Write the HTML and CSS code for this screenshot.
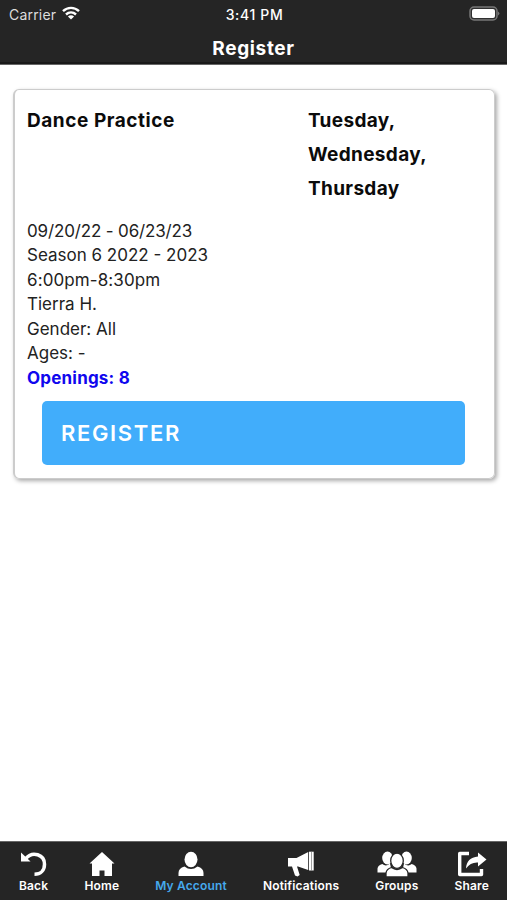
FILE: index.html
```html
<!DOCTYPE html>
<html lang="en">
<head>
<meta charset="utf-8">
<title>Register</title>
<link rel="stylesheet" href="styles.css">
</head>
<body>
<div class="screen">
  <header class="header">
    <div class="status">
      <div class="carrier"><span>Carrier</span>
        <svg class="wifi" viewBox="0 0 18 14"><g fill="none" stroke="#fff" stroke-width="2.4"><path d="M1 5.2C5.6.7 12.4.7 17 5.2"/><path d="M4 8.5C6.9 5.8 11.1 5.8 14 8.5"/></g><path d="M9 13.6 5.9 10.5Q9 7.9 12.1 10.5Z" fill="#fff"/></svg>
      </div>
      <time class="clock">3:41 PM</time>
      <svg class="battery" viewBox="0 0 31 16"><rect x="1" y="1" width="27" height="13" rx="4" fill="#303030" stroke="#777" stroke-width="1.5"/><rect x="3" y="3" width="23" height="9" rx="2" fill="#fff"/><path d="M29.2 5.5Q31.5 7.5 29.2 9.5Z" fill="#888"/></svg>
    </div>
    <h1 class="title">Register</h1>
  </header>
  <main class="content">
    <section class="card">
      <div class="card-head">
        <h2 class="name">Dance Practice</h2>
        <p class="days">Tuesday, Wednesday, Thursday</p>
      </div>
      <ul class="details">
        <li class="dates">09/20/22 - 06/23/23</li>
        <li>Season 6 2022 - 2023</li>
        <li class="hours">6:00pm-8:30pm</li>
        <li>Tierra H.</li>
        <li>Gender: All</li>
        <li>Ages: -</li>
        <li class="openings">Openings: 8</li>
      </ul>
      <button class="register">REGISTER</button>
    </section>
  </main>
  <nav class="tabs">
    <a class="tab back"><svg width="26" height="26" viewBox="0 0 26 26"><path d="M5 7.300C11.500-.3 23.500 3.500 23.500 13.200 23.500 19.500 19.500 23.300 13.500 23.300" fill="none" stroke="#fff" stroke-width="3.500"/><path d="M0 1.500V10.500H9.500Z" fill="#fff"/></svg><span>Back</span></a>
    <a class="tab home"><svg width="26" height="26" viewBox="0 0 26 26"><path d="M13 1 25.500 12.500H23V25H15.500V19.500H10.500V25H3V12.500H.5Z" fill="#fff"/></svg><span>Home</span></a>
    <a class="tab account"><svg width="26" height="26" viewBox="0 0 26 26"><ellipse cx="13" cy="8.500" rx="6.500" ry="7.700" fill="#fff"/><path d="M.5 25V22Q.5 17 6.500 15.500 13 20.500 19.500 15.500 25.500 17 25.500 22V25Z" fill="#fff"/></svg><span>My Account</span></a>
    <a class="tab notifications"><svg width="28" height="26" viewBox="0 0 28 26"><path d="M1 7H9.500L21.200 1V19L11 15.500H10L12.700 24 10.500 25.500 8 24.500 5 15.500H1Z" fill="#fff"/><path d="M22 .7H26.700V19.500H22Z" fill="#fff"/><path d="M24.500 1V19.500" stroke="#777" stroke-width=".7"/></svg><span>Notifications</span></a>
    <a class="tab groups"><svg width="40" height="26" viewBox="0 0 40 26"><g fill="#fff"><ellipse cx="10.500" cy="7" rx="5.300" ry="6.500"/><ellipse cx="29.500" cy="7" rx="5.300" ry="6.500"/><path d="M.5 21.500V17.500Q1 14 5.300 13 9 16 13 12.500L15 21.500ZM39.500 21.500V17.500Q39 14 34.700 13 31 16 27 12.500L25 21.500Z"/></g><g fill="#fff" stroke="#252525" stroke-width="1.300"><path d="M9 26V22Q9.500 18 14.500 16.500 20 20.500 25.500 16.500 30.500 18 31 22V26Z"/><ellipse cx="20" cy="9.800" rx="6.300" ry="7.600"/></g></svg><span>Groups</span></a>
    <a class="tab share"><svg width="30" height="26" viewBox="0 0 30 26"><path d="M12 2.500H2.700V23.500H24.500V18" fill="none" stroke="#fff" stroke-width="3.400" stroke-linejoin="round"/><path d="M21 1.500 29.500 8.500 21 15.500V11.500Q13.500 11 9 17.500 9.500 6.500 21 5.500Z" fill="#fff"/></svg><span>Share</span></a>
  </nav>
</div>
</body>
</html>
```
FILE: styles.css
```css
* { box-sizing: border-box; }
body, h1, h2, p, ul { margin: 0; padding: 0; }
body { font-family: Inter, "Liberation Sans", sans-serif; background: #fff; }
.screen { height: 900px; display: flex; flex-direction: column; }
.header { height: 65px; background: #252525; color: #fff; border-bottom: 1px solid #666; box-shadow: inset 0 -2px #191919; }
.status { height: 28px; padding: 0 7px 0 9px; display: grid; grid-template-columns: 1fr auto 1fr; align-items: center; }
.carrier { display: flex; align-items: center; gap: 6px; font-size: 14px; color: #ddd; letter-spacing: .2px; }
.wifi { width: 18px; height: 14px; margin-top: -2px; }
.clock { font-size: 14px; font-weight: 500; letter-spacing: .65px; }
.battery { width: 31px; height: 16px; justify-self: end; margin-top: -1px; }
.title { font-size: 19px; line-height: 42px; font-weight: 700; letter-spacing: .65px; text-align: center; }
.content { flex: 1; padding: 24px 12px 0 13px; }
.card { height: 390px; border: 2px solid #ccc; border-width: 1px 1px 1px 2px; border-radius: 6px; box-shadow: 2px 2px 4px #aaa; padding: 14px 29px 0 12px; }
.card-head { height: 115px; display: grid; grid-template-columns: 281px 1fr; color: #0b0b0b; }
.name, .days { font-size: 19px; line-height: 34.200px; font-weight: 700; }
.name { letter-spacing: .55px; }
.days { letter-spacing: .33px; }
.details { list-style: none; font-size: 17px; line-height: 24.450px; color: #222; }
.dates { letter-spacing: -.15px; }
.hours { letter-spacing: .1px; }
.openings { color: #1007ee; font-weight: 700; letter-spacing: .2px; }
.register { display: block; width: calc(100% - 15px); height: 64px; margin: 11px 0 0 15px; padding: 0 19px; border: 0; border-radius: 5px; background: #41adfb; color: #fff; font: 600 22px/64px Inter, sans-serif; letter-spacing: 1.650px; text-align: left; }
.tabs { height: 59px; padding: 9px 18px 0 19px; display: flex; justify-content: space-between; background: #252525; border-top: 1px solid #666; color: #fff; }
.tab { display: flex; flex-direction: column; align-items: center; font-size: 12px; font-weight: 600; line-height: 17px; letter-spacing: .15px; }
.tab svg { display: block; }
.account { color: #45a9ed; }
```
